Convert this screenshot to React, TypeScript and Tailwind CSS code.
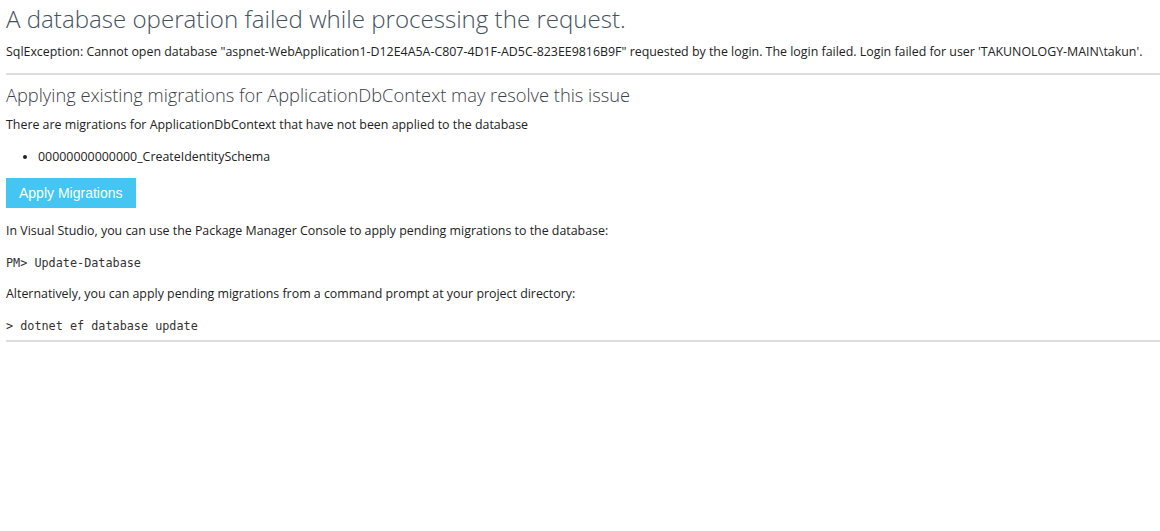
export default function App() {
  return (
    <div className="min-h-[531px] bg-white pl-[6px] text-[12.4px] leading-[18px] text-[#222] font-['Open_Sans',sans-serif]">
      <h1 className="pt-[3px] text-[24.1px] leading-[32px] font-light text-[#44525e]">
        A database operation failed while processing the request.
      </h1>
      <p className="mt-[8px] whitespace-nowrap">
        SqlException: Cannot open database "aspnet-WebApplication1-D12E4A5A-C807-4D1F-AD5C-823EE9816B9F" requested by the login. The login failed. Login failed for user 'TAKUNOLOGY-MAIN\takun'.
      </p>
      <hr className="mt-[12px] border border-[#ddd]" />
      <h2 className="mt-[8px] text-[18.3px] leading-[24px] font-light text-[#3a4148]">
        Applying existing migrations for ApplicationDbContext may resolve this issue
      </h2>
      <p className="mt-[9px]">There are migrations for ApplicationDbContext that have not been applied to the database</p>
      <ul className="mt-[14px] list-disc pl-[32px]">
        <li>00000000000000_CreateIdentitySchema</li>
      </ul>
      <button className="mt-[12px] block bg-[#44c5f2] px-[13px] py-[7px] text-[14px] leading-[16px] text-white font-['Liberation_Sans',Arial,sans-serif]">
        Apply Migrations
      </button>
      <p className="mt-[14px]">In Visual Studio, you can use the Package Manager Console to apply pending migrations to the database:</p>
      <code className="mt-[14px] block text-[11.8px] leading-[18px] text-[#333] font-['DejaVu_Sans_Mono',monospace]">PM&gt; Update-Database</code>
      <p className="mt-[13px]">Alternatively, you can apply pending migrations from a command prompt at your project directory:</p>
      <code className="mt-[14px] block text-[11.8px] leading-[18px] text-[#333] font-['DejaVu_Sans_Mono',monospace]">&gt; dotnet ef database update</code>
      <hr className="mt-[5px] border border-[#ddd]" />
    </div>
  );
}
